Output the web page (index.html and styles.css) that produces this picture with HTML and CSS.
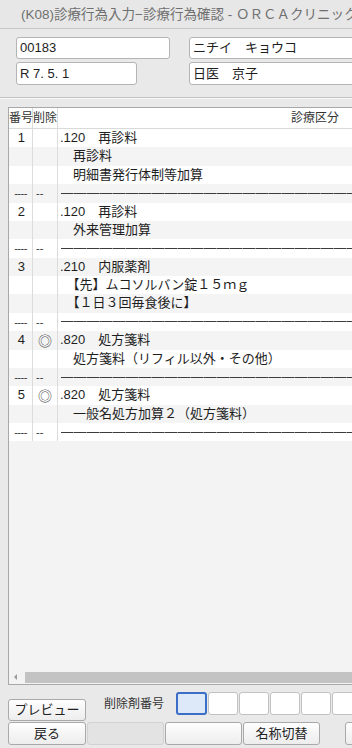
FILE: index.html
```html
<!DOCTYPE html>
<html lang="ja">
<head>
<meta charset="utf-8">
<title>診療行為確認</title>
<link rel="stylesheet" href="styles.css">
</head>
<body>
<div class="window">
  <div class="titlebar">(K08)診療行為入力−診療行為確認 - ＯＲＣＡクリニック</div>
  <div class="fields">
    <div class="field f-id">00183</div>
    <div class="field f-kana">ニチイ　キョウコ</div>
    <div class="field f-date">R 7. 5. 1</div>
    <div class="field f-name">日医　京子</div>
  </div>
  <div class="sep"></div>
  <div class="panel">
    <div class="grid">
      <div class="row head"><div class="c1">番号</div><div class="c2">削除</div><div class="c3">診療区分</div></div>
      <div class="row"><div class="c1 num">1</div><div class="c2"></div><div class="c3">.120　再診料</div></div>
      <div class="row"><div class="c1"></div><div class="c2"></div><div class="c3">　再診料</div></div>
      <div class="row"><div class="c1"></div><div class="c2"></div><div class="c3">　明細書発行体制等加算</div></div>
      <div class="row"><div class="c1 dash">----</div><div class="c2 dash2">--</div><div class="c3 line"></div></div>
      <div class="row"><div class="c1 num">2</div><div class="c2"></div><div class="c3">.120　再診料</div></div>
      <div class="row"><div class="c1"></div><div class="c2"></div><div class="c3">　外来管理加算</div></div>
      <div class="row"><div class="c1 dash">----</div><div class="c2 dash2">--</div><div class="c3 line"></div></div>
      <div class="row"><div class="c1 num">3</div><div class="c2"></div><div class="c3">.210　内服薬剤</div></div>
      <div class="row"><div class="c1"></div><div class="c2"></div><div class="c3">　【先】ムコソルバン錠１５ｍｇ</div></div>
      <div class="row"><div class="c1"></div><div class="c2"></div><div class="c3">　【１日３回毎食後に】</div></div>
      <div class="row"><div class="c1 dash">----</div><div class="c2 dash2">--</div><div class="c3 line"></div></div>
      <div class="row"><div class="c1 num">4</div><div class="c2 mark">◎</div><div class="c3">.820　処方箋料</div></div>
      <div class="row"><div class="c1"></div><div class="c2"></div><div class="c3">　処方箋料（リフィル以外・その他）</div></div>
      <div class="row"><div class="c1 dash">----</div><div class="c2 dash2">--</div><div class="c3 line"></div></div>
      <div class="row"><div class="c1 num">5</div><div class="c2 mark">◎</div><div class="c3">.820　処方箋料</div></div>
      <div class="row"><div class="c1"></div><div class="c2"></div><div class="c3">　一般名処方加算２（処方箋料）</div></div>
      <div class="row"><div class="c1 dash">----</div><div class="c2 dash2">--</div><div class="c3 line"></div></div>
    </div>
    <div class="spacer"></div>
    <div class="hscroll"><span class="arrow"></span><span class="thumb"></span></div>
  </div>
  <div class="bar1">
    <div class="btn preview">プレビュー</div>
    <div class="label">削除剤番号</div>
    <div class="boxes">
      <div class="box focus"></div>
      <div class="box"></div>
      <div class="box"></div>
      <div class="box"></div>
      <div class="box"></div>
      <div class="box"></div>
    </div>
  </div>
  <div class="bar2">
    <div class="btn wide">戻る</div>
    <div class="btn off"></div>
    <div class="btn"></div>
    <div class="btn">名称切替</div>
    <div class="btn far"></div>
  </div>
</div>
</body>
</html>
```

FILE: styles.css
```css
html, body {
  margin: 0;
  padding: 0;
}
body {
  width: 352px;
  height: 748px;
  overflow: hidden;
  background: #e9e9e9;
  font-family: "Liberation Sans", "Noto Sans CJK JP", sans-serif;
  color: #1e1e1e;
}
.window {
  width: 352px;
  height: 748px;
  overflow: hidden;
}
.titlebar {
  height: 28px;
  line-height: 30px;
  border-bottom: 1px solid #c6c6c6;
  background: #e7e7e7;
  padding-left: 21px;
  font-size: 13.5px;
  color: #707070;
  white-space: nowrap;
  overflow: hidden;
}
.fields {
  display: grid;
  grid-template-columns: 154px 220px;
  column-gap: 19px;
  row-gap: 3px;
  padding: 8px 0 0 16px;
}
.field {
  box-sizing: border-box;
  background: #fff;
  border: 1px solid #b4b4b4;
  border-radius: 3px;
  font-size: 13px;
  padding-left: 3px;
  white-space: nowrap;
  overflow: hidden;
}
.f-id, .f-kana {
  height: 22px;
  line-height: 20px;
}
.f-date, .f-name {
  height: 23px;
  line-height: 21px;
}
.f-date {
  width: 121px;
}
.sep {
  margin-top: 12px;
  height: 0;
  border-top: 1px solid #c4c4c4;
  border-bottom: 1px solid #f8f8f8;
}
.panel {
  box-sizing: border-box;
  margin: 8px 0 0 8px;
  width: 620px;
  height: 578px;
  border: 1px solid #a8a8a8;
  background: #f3f3f3;
  display: flex;
  flex-direction: column;
}
.grid {
  background: #fff;
}
.row {
  display: grid;
  grid-template-columns: 24px 25px 514px;
  height: 18.375px;
  line-height: 18.375px;
  font-size: 13px;
  white-space: nowrap;
}
.row:nth-child(odd) {
  background: #f4f4f4;
}
.row.head {
  height: 20px;
  line-height: 20px;
  border-bottom: 1px solid #dadada;
  background: #fff;
  font-size: 12px;
  color: #333;
}
.c1, .c2 {
  box-sizing: border-box;
  border-right: 1px solid #dcdcdc;
  overflow: hidden;
}
.c3 {
  padding-left: 2px;
  overflow: hidden;
}
.head .c1, .head .c2 {
  text-align: center;
  overflow: visible;
}
.head .c3 {
  text-align: center;
  padding-left: 0;
}
.num {
  text-align: right;
  padding-right: 7px;
}
.mark {
  text-align: center;
  color: #4a4a4a;
  font-size: 14px;
  font-family: "Noto Sans CJK JP", sans-serif;
}
.dash {
  text-align: center;
  font-size: 11px;
  color: #333;
  letter-spacing: -0.5px;
}
.dash2 {
  padding-left: 3px;
  font-size: 11px;
  color: #333;
}
.line {
  display: flex;
  align-items: center;
  padding-left: 3px;
}
.line::before {
  content: "";
  flex: 1;
  height: 1px;
  background: repeating-linear-gradient(90deg, #3c3c3c 0 12px, #8a8a8a 12px 13px);
}
.spacer {
  flex: 1;
}
.hscroll {
  height: 12px;
  margin-bottom: 1px;
  display: flex;
  align-items: center;
}
.arrow {
  width: 0;
  height: 0;
  margin-left: 5px;
  border-top: 3px solid transparent;
  border-bottom: 3px solid transparent;
  border-right: 3px solid #9a9a9a;
}
.thumb {
  margin-left: 8px;
  flex: 1;
  height: 11px;
  background: #c3c3c3;
}
.bar1 {
  margin-top: 7px;
  height: 30px;
  display: flex;
  align-items: flex-start;
  padding-left: 8px;
}
.btn {
  box-sizing: border-box;
  width: 77px;
  height: 23px;
  line-height: 21px;
  text-align: center;
  font-size: 13px;
  color: #222;
  border: 1px solid #a9a9a9;
  border-radius: 3px;
  background: linear-gradient(#fefefe, #ededed);
  white-space: nowrap;
  flex: none;
}
.preview {
  width: 78px;
  height: 22px;
  line-height: 20px;
  margin-top: 7px;
}
.label {
  flex: none;
  white-space: nowrap;
  margin-left: 18px;
  margin-top: 5px;
  font-size: 12px;
  line-height: 14px;
  color: #333;
}
.boxes {
  display: flex;
  gap: 1px;
  margin-left: 12px;
  flex: none;
}
.box {
  box-sizing: border-box;
  width: 30px;
  height: 23px;
  background: #fff;
  border: 1px solid #c2c2c2;
  border-radius: 3px;
  flex: none;
}
.box.focus {
  width: 31px;
  border: 2px solid #3b6ec6;
  background: #dde9f8;
}
.bar2 {
  display: flex;
  gap: 1px;
  padding-left: 8px;
}
.btn.wide {
  width: 78px;
}
.btn.off {
  background: #e3e3e3;
  border-color: #d2d2d2;
}
.btn.far {
  margin-left: 24px;
}
```
